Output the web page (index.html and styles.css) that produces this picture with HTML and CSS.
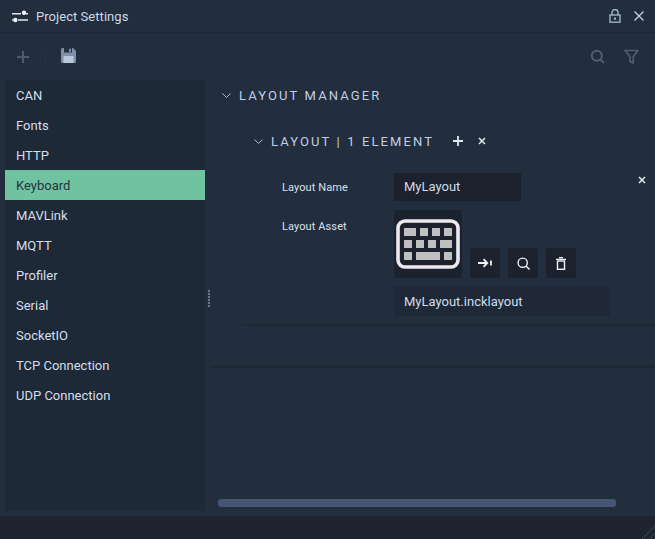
FILE: index.html
```html
<!DOCTYPE html>
<html lang="en">
<head>
    <meta charset="UTF-8">
    <meta name="viewport" content="width=device-width, initial-scale=1.0">
    <title>Project Settings</title>
    <link rel="stylesheet" href="styles.css">
</head>
<body>
    <div class="window">
        <div class="titlebar">
            <svg class="title-icon" width="16" height="13" viewBox="0 0 16 13">
                <path d="M0 3.700h9M14 3.700h2M0 10h1M6 10h10" stroke="#dfe6ee" stroke-width="1.400" fill="none"/>
                <circle cx="12" cy="2.700" r="2.200" fill="#eef2f6"/>
                <circle cx="3.300" cy="10" r="2.200" fill="#eef2f6"/>
            </svg>
            <span class="title-text">Project Settings</span>
            <svg class="title-lock" width="12" height="14" viewBox="0 0 12 14">
                <path d="M3 6V3.600a3 3 0 0 1 6 0V6" stroke="#a9bdd4" stroke-width="1.300" fill="none"/>
                <rect x="1" y="6" width="10" height="7.200" stroke="#a9bdd4" stroke-width="1.300" fill="none"/>
                <rect x="5" y="8.600" width="2" height="2" fill="#a9bdd4"/>
            </svg>
            <svg class="title-close" width="12" height="12" viewBox="0 0 12 12">
                <path d="M1.500 1.500l9 9M10.500 1.500l-9 9" stroke="#c3d2e2" stroke-width="1.300"/>
            </svg>
        </div>

        <div class="toolbar">
            <svg class="tool-add" width="14" height="14" viewBox="0 0 14 14">
                <path d="M7 1v12M1 7h12" stroke="#4a5a70" stroke-width="2"/>
            </svg>
            <div class="tool-sep"></div>
            <svg class="tool-save" width="15" height="15" viewBox="0 0 15 15">
                <path d="M0 1.500A1.500 1.500 0 0 1 1.500 0H12l3 3v10.500A1.500 1.500 0 0 1 13.500 15H1.500A1.500 1.500 0 0 1 0 13.500z" fill="#7f90a8"/>
                <rect x="3" y="0" width="8" height="4.500" fill="#25303f"/>
                <rect x="8" y="0.800" width="2" height="3" fill="#7f90a8"/>
                <rect x="2.500" y="8" width="10" height="7" fill="#b9c9dc"/>
            </svg>
            <div class="tool-space"></div>
            <svg class="tool-search" width="15" height="15" viewBox="0 0 15 15">
                <circle cx="6.800" cy="6.800" r="5" stroke="#4f5f75" stroke-width="2" fill="none"/>
                <path d="M10.500 10.500l3.500 3.500" stroke="#4f5f75" stroke-width="2"/>
            </svg>
            <svg class="tool-filter" width="15" height="15" viewBox="0 0 15 15">
                <path d="M1 1.500h13L9.300 7.500V14L6 12.500V7.500z" stroke="#4f5f75" stroke-width="1.700" fill="none" stroke-linejoin="round"/>
            </svg>
        </div>

        <div class="body">
            <ul class="sidebar">
                <li>CAN</li>
                <li>Fonts</li>
                <li>HTTP</li>
                <li class="active">Keyboard</li>
                <li>MAVLink</li>
                <li>MQTT</li>
                <li>Profiler</li>
                <li>Serial</li>
                <li>SocketIO</li>
                <li>TCP Connection</li>
                <li>UDP Connection</li>
            </ul>
            <div class="splitter"><div class="grip"></div></div>

            <div class="content">
                <div class="panel">
                    <div class="section-head">
                        <svg class="chevron" width="9" height="5" viewBox="0 0 9 5"><path d="M.5.500l4 4 4-4" stroke="#a9bdd4" fill="none"/></svg>
                        <span class="section-title">LAYOUT MANAGER</span>
                    </div>

                    <div class="sub-section">
                        <div class="sub-head">
                            <svg class="chevron" width="9" height="5" viewBox="0 0 9 5"><path d="M.5.500l4 4 4-4" stroke="#a9bdd4" fill="none"/></svg>
                            <span class="section-title">LAYOUT | 1 ELEMENT</span>
                            <svg class="sub-add" width="10" height="10" viewBox="0 0 10 10"><path d="M5 0v10M0 5h10" stroke="#e3e9f0" stroke-width="1.800"/></svg>
                            <svg class="sub-close" width="8" height="8" viewBox="0 0 8 8"><path d="M1 1l6 6M7 1L1 7" stroke="#e3e9f0" stroke-width="1.500"/></svg>
                        </div>

                        <div class="element">
                            <svg class="element-close" width="8" height="8" viewBox="0 0 8 8"><path d="M1 1l6 6M7 1L1 7" stroke="#e3e9f0" stroke-width="1.500"/></svg>
                            <div class="field name-field">
                                <label class="field-label">Layout Name</label>
                                <div class="input name-input">MyLayout</div>
                            </div>
                            <div class="field asset-field">
                                <label class="field-label asset-label">Layout Asset</label>
                                <div class="asset">
                                    <div class="asset-row">
                                        <div class="thumb">
                                            <svg width="64" height="50" viewBox="0 0 64 50">
                                                <rect x="2" y="2" width="60" height="46" rx="7" stroke="#ece8ee" stroke-width="3.600" fill="#1b222d"/>
                                                <g fill="#bfbfbf">
                                                    <rect x="8" y="9" width="12" height="8"/>
                                                    <rect x="24" y="9" width="8" height="8"/>
                                                    <rect x="36" y="9" width="8" height="8"/>
                                                    <rect x="48" y="9" width="8" height="8"/>
                                                    <rect x="8" y="21" width="8" height="8"/>
                                                    <rect x="20" y="21" width="8" height="8"/>
                                                    <rect x="32" y="21" width="8" height="8"/>
                                                    <rect x="44" y="21" width="12" height="8"/>
                                                    <rect x="8" y="33" width="8" height="8"/>
                                                    <rect x="20" y="33" width="24" height="8"/>
                                                    <rect x="48" y="33" width="8" height="8"/>
                                                </g>
                                            </svg>
                                        </div>
                                        <div class="icon-btn">
                                            <svg width="14" height="10" viewBox="0 0 14 10"><path d="M0 5h9M5.500 1.200L9.300 5 5.500 8.800" stroke="#eef1f5" stroke-width="1.800" fill="none"/><path d="M13 2.500v5" stroke="#eef1f5" stroke-width="1.800"/></svg>
                                        </div>
                                        <div class="icon-btn">
                                            <svg width="13" height="13" viewBox="0 0 13 13"><circle cx="5.700" cy="5.700" r="4.600" stroke="#eef1f5" stroke-width="1.400" fill="none"/><path d="M9 9l3.500 3.500" stroke="#eef1f5" stroke-width="1.500"/></svg>
                                        </div>
                                        <div class="icon-btn">
                                            <svg width="10" height="13" viewBox="0 0 10 13"><path d="M0 2.400h10M3 .6h4" stroke="#eef1f5" stroke-width="1.200"/><rect x="1.500" y="4" width="7" height="8.300" stroke="#eef1f5" stroke-width="1.400" fill="none"/></svg>
                                        </div>
                                    </div>
                                    <div class="input path-input">MyLayout.incklayout</div>
                                </div>
                            </div>
                        </div>
                    </div>
                </div>

                <div class="h-scroll"><div class="h-thumb"></div></div>
            </div>
        </div>

        <div class="footer">
            <svg class="resize" width="14" height="14" viewBox="0 0 14 14"><path d="M1 14L14 1M8 14l6-6" stroke="#3a4a5e"/></svg>
        </div>
    </div>
</body>
</html>
```

FILE: styles.css
```css
* {
    box-sizing: border-box;
}
body {
    margin: 0;
    font-family: Roboto, "Liberation Sans", sans-serif;
    font-size: 13px;
    color: #d5deea;
    background-color: #222d3d;
}
svg {
    display: block;
    flex-shrink: 0;
}
.window {
    display: flex;
    flex-direction: column;
    width: 655px;
    height: 539px;
    overflow: hidden;
}
.titlebar {
    display: flex;
    align-items: center;
    height: 33px;
    padding-left: 12px;
    border-bottom: 1px solid #1e2835;
}
.title-text {
    margin-left: 8px;
    flex: 1;
    font-size: 13px;
    letter-spacing: 0.05px;
    color: #cdd8e6;
}
.title-close {
    margin: 0 10px 0 12px;
}
.toolbar {
    display: flex;
    align-items: center;
    height: 47px;
    padding: 0 16px 0 16px;
}
.tool-sep {
    width: 1px;
    height: 16px;
    margin: 0 15px 0 15px;
    background-color: #273342;
}
.tool-save {
    margin-bottom: 2px;
}
.tool-space {
    flex: 1;
}
.tool-filter {
    margin-left: 19px;
}
.body {
    flex: 1;
    display: flex;
    min-height: 0;
    padding-left: 5px;
}
.sidebar {
    width: 200px;
    height: 431px;
    margin: 0;
    padding: 0;
    list-style: none;
    background-color: #1d2937;
}
.sidebar li {
    height: 30px;
    padding-left: 11px;
    line-height: 32px;
    color: #d5deea;
}
.sidebar li.active {
    background-color: #6fc3a1;
    color: #26343a;
}
.splitter {
    display: flex;
    align-items: center;
    width: 5px;
    height: 431px;
}
.grip {
    width: 2px;
    height: 17px;
    margin: 6px 0 0 3px;
    background: repeating-linear-gradient(#6d7787 0 2px, transparent 2px 3px);
}
.content {
    flex: 1;
    display: flex;
    flex-direction: column;
    min-width: 0;
}
.panel {
    flex: 1;
}
.panel .chevron {
    margin-right: 8px;
}
.section-title {
    font-size: 13px;
    letter-spacing: 2.12px;
    color: #c0d0e2;
}
.section-head {
    display: flex;
    align-items: center;
    height: 30px;
    padding-left: 12px;
}
.sub-section {
    margin-top: 16px;
    height: 242px;
    border-bottom: 2px solid #1e2835;
}
.sub-head {
    display: flex;
    align-items: center;
    height: 30px;
    padding-left: 44px;
}
.sub-add {
    margin-left: 19px;
}
.sub-close {
    margin-left: 15px;
}
.element {
    position: relative;
    height: 170px;
    margin-left: 32px;
    padding: 17px 0 0 40px;
    border-bottom: 2px solid #1e2835;
}
.element-close {
    position: absolute;
    top: 20px;
    right: 9px;
}
.field {
    display: flex;
}
.field-label {
    width: 112px;
    font-size: 11px;
    letter-spacing: 0.1px;
    color: #d8e1ec;
}
.name-field {
    align-items: center;
    height: 28px;
}
.asset-field {
    margin-top: 9px;
}
.asset-label {
    margin-top: 10px;
}
.input {
    height: 30px;
    padding-left: 10px;
    line-height: 31px;
    background-color: #1b222d;
    color: #cfdcec;
}
.name-input {
    width: 127px;
    height: 28px;
    line-height: 28px;
}
.path-input {
    width: 216px;
    margin-top: 8px;
    background-color: #1e2836;
}
.asset-row {
    display: flex;
    align-items: flex-end;
}
.thumb {
    display: flex;
    align-items: center;
    justify-content: center;
    width: 68px;
    height: 68px;
    border-radius: 2px;
    background-color: #1b222d;
}
.icon-btn {
    display: flex;
    align-items: center;
    justify-content: center;
    width: 30px;
    height: 30px;
    margin-left: 8px;
    border-radius: 2px;
    background-color: #1b222d;
}
.h-scroll {
    height: 24px;
    padding: 7px 0 0 8px;
}
.h-thumb {
    width: 398px;
    height: 8px;
    border-radius: 3px;
    background-color: #445672;
}
.footer {
    display: flex;
    justify-content: flex-end;
    align-items: flex-end;
    height: 23px;
    background-color: #1f2530;
}
```
